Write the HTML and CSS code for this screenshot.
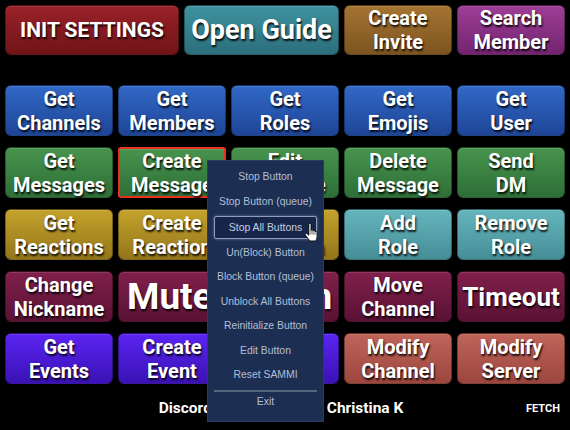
FILE: index.html
```html
<!DOCTYPE html>
<html lang="en">
<head>
  <meta charset="UTF-8">
  <meta name="viewport" content="width=device-width, initial-scale=1.0">
  <title>SAMMI Discord Deck</title>
  <link rel="stylesheet" href="styles.css">
</head>
<body>
  <div class="deck">
    <div class="top-row">
      <button class="btn red init">INIT SETTINGS</button>
      <button class="btn teal guide">Open Guide</button>
      <button class="btn brown">Create<br>Invite</button>
      <button class="btn purple">Search<br>Member</button>
    </div>

    <div class="grid">
      <button class="btn blue">Get<br>Channels</button>
      <button class="btn blue">Get<br>Members</button>
      <button class="btn blue">Get<br>Roles</button>
      <button class="btn blue">Get<br>Emojis</button>
      <button class="btn blue">Get<br>User</button>

      <button class="btn green">Get<br>Messages</button>
      <button class="btn green selected">Create<br>Message</button>
      <button class="btn green">Edit<br>Message</button>
      <button class="btn green">Delete<br>Message</button>
      <button class="btn green">Send<br>DM</button>

      <button class="btn gold">Get<br>Reactions</button>
      <button class="btn gold">Create<br>Reaction</button>
      <button class="btn gold">Delete<br>Reaction</button>
      <button class="btn aqua">Add<br>Role</button>
      <button class="btn aqua">Remove<br>Role</button>

      <button class="btn maroon">Change<br>Nickname</button>
      <button class="btn maroon mute">Mute Button</button>
      <button class="btn maroon">Move<br>Channel</button>
      <button class="btn maroon timeout">Timeout</button>

      <button class="btn violet">Get<br>Events</button>
      <button class="btn violet">Create<br>Event</button>
      <button class="btn violet">Delete<br>Event</button>
      <button class="btn salmon">Modify<br>Channel</button>
      <button class="btn salmon">Modify<br>Server</button>
    </div>

    <div class="status">
      <span></span>
      <span class="status-name">Discord Bot Connected: Christina K</span>
      <span class="fetch">FETCH</span>
    </div>

    <ul class="context-menu">
      <li>Stop Button</li>
      <li>Stop Button (queue)</li>
      <li class="hover">Stop All Buttons</li>
      <li>Un(Block) Button</li>
      <li>Block Button (queue)</li>
      <li>Unblock All Buttons</li>
      <li>Reinitialize Button</li>
      <li>Edit Button</li>
      <li>Reset SAMMI</li>
      <li class="separator"></li>
      <li class="exit">Exit</li>
    </ul>

    <svg class="cursor" width="14" height="19" viewBox="0 0 13 18">
      <path d="M4.5 1.2C4.5 0.1 6.5 0.1 6.5 1.2L6.5 7.2C6.5 6.2 8.4 6.2 8.4 7.2L8.4 7.8C8.4 6.8 10.3 6.8 10.3 7.8L10.3 8.4C10.3 7.5 12.2 7.5 12.2 8.4L12.2 12.8C12.2 15 11.4 16.3 10.6 17L5.6 17C4.6 16 2.8 13.4 1.2 11.4C0.4 10.3 1.6 9.2 2.6 10L4.5 11.6Z" fill="#fff" stroke="#000" stroke-width="0.8" stroke-linejoin="round"/>
      <path d="M6.5 7.4L6.5 11M8.4 8L8.4 11M10.3 8.6L10.3 11" stroke="#000" stroke-width="0.6"/>
    </svg>
  </div>
</body>
</html>
```

FILE: styles.css
```css
html, body {
  margin: 0;
  background-color: #000;
}
body {
  font-family: Roboto, "Liberation Sans", sans-serif;
  overflow: hidden;
}
.deck {
  position: relative;
  width: 560px;
  height: 420px;
  padding: 5px;
}
.top-row {
  display: grid;
  grid-template-columns: 174px 155px 108px 108px;
  column-gap: 5px;
  height: 50px;
  margin-bottom: 30px;
}
.grid {
  display: grid;
  grid-template-columns: repeat(5, 108px);
  grid-auto-rows: 51px;
  column-gap: 5px;
  row-gap: 11px;
}
.btn {
  display: flex;
  align-items: center;
  justify-content: center;
  padding: 0;
  border: 1px solid rgba(0, 0, 0, 0.35);
  border-radius: 6px;
  font-family: Roboto, "Liberation Sans", sans-serif;
  font-weight: 700;
  font-size: 20px;
  line-height: 24px;
  color: #fff;
  text-align: center;
  text-shadow: 1px 2px 2px rgba(0, 0, 0, 0.9);
  box-shadow: inset 0 1px 0 rgba(255, 255, 255, 0.12);
  cursor: pointer;
}
.init {
  font-size: 21px;
}
.guide {
  font-size: 27px;
}
.mute {
  grid-column: span 2;
  font-size: 37px;
  justify-content: flex-start;
  padding-left: 8px;
}
.timeout {
  font-size: 26px;
}
.selected {
  border: 2px solid #e8321e;
  border-radius: 3px;
}
.red { background: linear-gradient(#9a2129, #701418); }
.teal { background: linear-gradient(#3f92a0, #2c6e7c); }
.brown { background: linear-gradient(#a57432, #7c5420); }
.purple { background: linear-gradient(#9e3e96, #722470); }
.blue { background: linear-gradient(#3168c6, #1e4596); }
.green { background: linear-gradient(#47944e, #2e6e37); }
.gold { background: linear-gradient(#c4a22c, #93761a); }
.aqua { background: linear-gradient(#65b5bd, #468e97); }
.maroon { background: linear-gradient(#80204c, #5a1233); }
.violet { background: linear-gradient(#5a24f2, #3a12b4); }
.salmon { background: linear-gradient(#c0645a, #9c463e); }

.status {
  display: grid;
  grid-template-columns: 1fr auto 1fr;
  align-items: center;
  margin-top: 15px;
  height: 18px;
  color: #fff;
  font-weight: 700;
  text-shadow: 1px 1px 1px rgba(0, 0, 0, 0.8);
}
.status-name {
  font-size: 15.5px;
  margin-right: 8px;
}
.fetch {
  justify-self: end;
  margin-right: 5px;
  font-size: 11px;
}

.context-menu {
  position: absolute;
  left: 207px;
  top: 160px;
  width: 103px;
  margin: 0;
  padding: 4px 6px 9px;
  list-style: none;
  background-color: #1c2e52;
  border: 1px solid #2a3c62;
  font-family: "Liberation Sans", Arial, sans-serif;
  font-size: 10.4px;
  color: #b3bfd6;
  z-index: 2;
}
.context-menu li {
  height: 24.5px;
  line-height: 24.5px;
  text-align: center;
  white-space: nowrap;
}
.context-menu .hover {
  height: 21px;
  line-height: 21px;
  margin: 2px 0 1.5px;
  border: 1px solid #8d9dbb;
  border-radius: 2px;
  background-color: #16264a;
  box-shadow: 0 0 3px rgba(170, 190, 230, 0.55);
  color: #c4cee2;
}
.context-menu .separator {
  height: 2px;
  margin-top: 2px;
  background-color: #56667e;
}
.context-menu .exit {
  height: 20px;
  line-height: 20px;
}
.cursor {
  position: absolute;
  left: 304px;
  top: 223px;
  z-index: 3;
}
```
